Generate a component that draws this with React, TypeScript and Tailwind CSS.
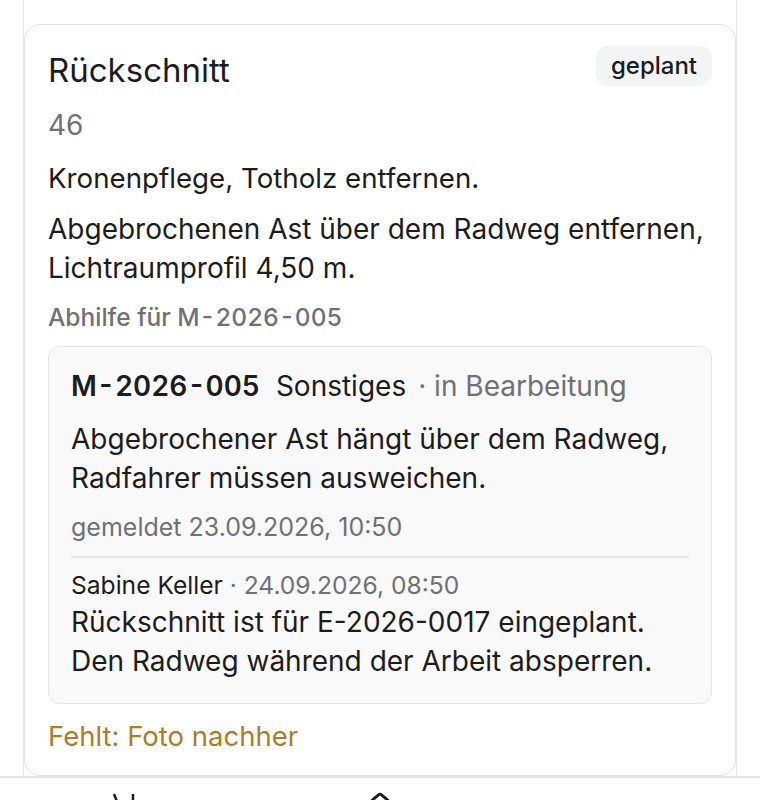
import {Home} from "lucide-react";

const Id = ({children, className}: {children: string, className?: string}) => (
    <span className={'tabular-nums ' + (className ?? '')}>{children}</span>
)

const App = () => {
    return (
        <div className="h-[800px] w-[760px] overflow-hidden bg-white text-[#1c1c1c]"
             style={{fontFamily: 'Inter, "Noto Sans", sans-serif'}}>
            <div className="mx-[23px] h-[776px] border-x border-[#e4e4e4] pt-[24px]">
                <div className="rounded-[16px] border border-[#e2e2e2] bg-white px-[23px] pt-[25px] pb-[19px]">
                    <div className="flex items-start justify-between">
                        <h2 className="text-[33px] leading-[40px] font-normal">Rückschnitt</h2>
                        <span className="mt-[-4px] rounded-[12px] bg-[#f3f5f5] px-[15px] text-[24px] leading-[40px] font-medium">
                            geplant
                        </span>
                    </div>

                    <div className="mt-[16px] text-[28px] leading-[39px] text-[#6e7272]">46</div>
                    <p className="mt-[14px] text-[27.7px] leading-[39px]">Kronenpflege, Totholz entfernen.</p>
                    <p className="mt-[12px] text-[28px] leading-[39px]">
                        Abgebrochenen Ast über dem Radweg entfernen, Lichtraumprofil 4,50 m.
                    </p>
                    <div className="mt-[11px] text-[24.5px] leading-[36px] font-medium text-[#6e7272]">
                        Abhilfe für <Id>M-2026-005</Id>
                    </div>

                    <div className="mt-[11px] rounded-[12px] border border-[#e4e4e4] bg-[#f9f9f9] px-[22px] pt-[20px] pb-[22px]">
                        <div className="flex items-baseline text-[28px] leading-[39px]">
                            <Id className="font-semibold">M-2026-005</Id>
                            <span className="ml-[16px]">Sonstiges</span>
                            <span className="ml-[12px] text-[#6e7272]">· in Bearbeitung</span>
                        </div>
                        <p className="mt-[14px] text-[28px] leading-[39px]">
                            Abgebrochener Ast hängt über dem Radweg, Radfahrer müssen ausweichen.
                        </p>
                        <div className="mt-[11px] text-[25px] leading-[36px] text-[#6e7272]">
                            gemeldet 23.09.2026, 10:50
                        </div>
                        <div className="mt-[11px] border-t-2 border-[#e4e4e4] pt-[9px]">
                            <div className="text-[24.6px] leading-[36px]">
                                Sabine Keller <span className="text-[#6e7272]">· 24.09.2026, 08:50</span>
                            </div>
                            <p className="text-[28px] leading-[39px]">
                                Rückschnitt ist für E-2026-0017 eingeplant. Den Radweg während der Arbeit absperren.
                            </p>
                        </div>
                    </div>

                    <div className="mt-[13px] text-[27.5px] leading-[39px] text-[#b07a28]">Fehlt: Foto nachher</div>
                </div>
            </div>

            <nav className="flex h-[24px] border-t-2 border-[#e4e4e4] bg-white pt-[14px]">
                <div className="ml-[106px] flex h-[28px] w-[36px] justify-center">
                    <svg width="36" height="28" viewBox="0 0 36 28" fill="none" stroke="#1c1c1c" strokeWidth="2.5">
                        <path d="M8 2 L12 12"/>
                        <path d="M27 2 V12"/>
                    </svg>
                </div>
                <div className="ml-[224px] flex h-[28px] w-[28px] justify-center">
                    <Home size={28} strokeWidth={2.5} color="#1c1c1c"/>
                </div>
            </nav>
        </div>
    );
};

export default App;
